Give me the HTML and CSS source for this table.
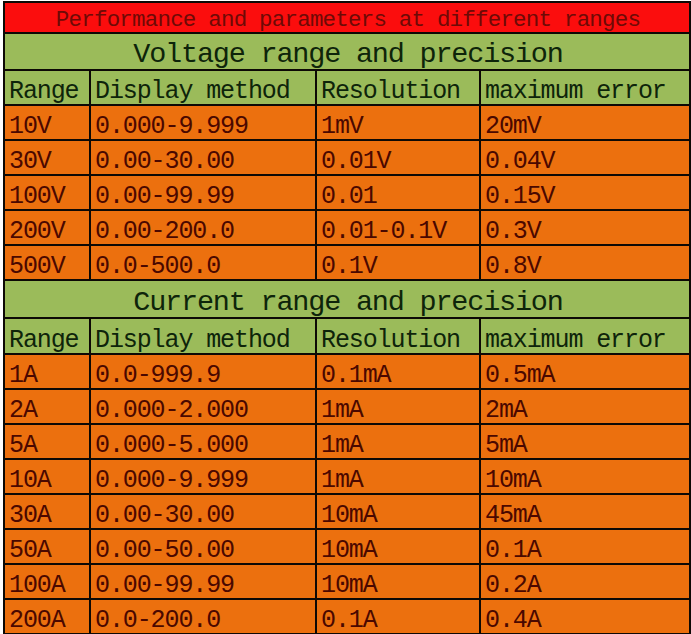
FILE: index.html
```
<!DOCTYPE html>
<html>
<head>
<meta charset="utf-8">
<link rel="stylesheet" href="styles.css">
</head>
<body>
<table class="spec">
  <colgroup>
    <col class="c1"><col class="c2"><col class="c3"><col class="c4">
  </colgroup>
  <tr class="title"><td colspan="4">Performance and parameters at different ranges</td></tr>
  <tr class="section"><td colspan="4">Voltage range and precision</td></tr>
  <tr class="head"><td>Range</td><td>Display method</td><td>Resolution</td><td>maximum error</td></tr>
  <tr class="row"><td>10V</td><td>0.000-9.999</td><td>1mV</td><td>20mV</td></tr>
  <tr class="row"><td>30V</td><td>0.00-30.00</td><td>0.01V</td><td>0.04V</td></tr>
  <tr class="row"><td>100V</td><td>0.00-99.99</td><td>0.01</td><td>0.15V</td></tr>
  <tr class="row"><td>200V</td><td>0.00-200.0</td><td>0.01-0.1V</td><td>0.3V</td></tr>
  <tr class="row"><td>500V</td><td>0.0-500.0</td><td>0.1V</td><td>0.8V</td></tr>
  <tr class="section s2"><td colspan="4">Current range and precision</td></tr>
  <tr class="head h2"><td>Range</td><td>Display method</td><td>Resolution</td><td>maximum error</td></tr>
  <tr class="row"><td>1A</td><td>0.0-999.9</td><td>0.1mA</td><td>0.5mA</td></tr>
  <tr class="row"><td>2A</td><td>0.000-2.000</td><td>1mA</td><td>2mA</td></tr>
  <tr class="row"><td>5A</td><td>0.000-5.000</td><td>1mA</td><td>5mA</td></tr>
  <tr class="row"><td>10A</td><td>0.000-9.999</td><td>1mA</td><td>10mA</td></tr>
  <tr class="row"><td>30A</td><td>0.00-30.00</td><td>10mA</td><td>45mA</td></tr>
  <tr class="row"><td>50A</td><td>0.00-50.00</td><td>10mA</td><td>0.1A</td></tr>
  <tr class="row"><td>100A</td><td>0.00-99.99</td><td>10mA</td><td>0.2A</td></tr>
  <tr class="row"><td>200A</td><td>0.0-200.0</td><td>0.1A</td><td>0.4A</td></tr>
</table>
</body>
</html>
```
FILE: styles.css
```
html, body {
  margin: 0;
  padding: 0;
  background: #ffffff;
}
body {
  padding: 1px 2px 0 3px;
}
.spec {
  border-collapse: collapse;
  table-layout: fixed;
  width: 686px;
  font-family: "Liberation Mono", "DejaVu Sans Mono", monospace;
  font-size: 25px;
  letter-spacing: -1.1px;
  line-height: 1;
}
.c1 { width: 86px; }
.c2 { width: 226px; }
.c3 { width: 164px; }
.c4 { width: 210px; }
.spec td {
  border: 2px solid #0d0905;
  padding: 0 2px 0 4px;
  vertical-align: bottom;
  white-space: nowrap;
  overflow: hidden;
}
.title td {
  background: #fb0d0d;
  color: #6e0a06;
  font-size: 22.5px;
  letter-spacing: -0.8px;
  text-align: center;
  height: 28px;
  padding-bottom: 1px;
}
.section td {
  background: #9bbb5a;
  color: #0e240a;
  font-size: 28.5px;
  letter-spacing: -1.2px;
  text-align: center;
  height: 35px;
  padding-bottom: 0;
}
.s2 td { height: 36px; }
.head td {
  background: #9bbb5a;
  color: #0e240a;
  height: 33px;
}
.h2 td { height: 34px; }
.row td {
  background: #ec700e;
  color: #4a0800;
  height: 33px;
}
```
